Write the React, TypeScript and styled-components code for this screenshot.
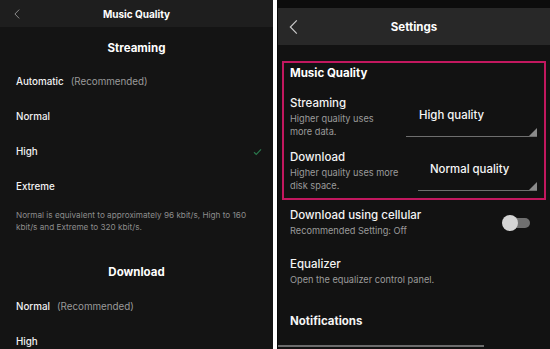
import React from 'react';
import styled, { createGlobalStyle } from 'styled-components';

const GlobalStyle = createGlobalStyle`
  html, body {
    margin: 0;
    padding: 0;
    background: #ffffff;
  }
  body {
    font-family: Inter, "Noto Sans", "Liberation Sans", sans-serif;
    -webkit-font-smoothing: antialiased;
  }
`;

const Back: React.FC<{ size: number; color: string }> = ({ size, color }) => (
  <svg width={size * 0.6} height={size} viewBox="0 0 6 10" fill="none">
    <path d="M5.2 0.6 L0.9 5 L5.2 9.4" stroke={color} strokeWidth="0.8" />
  </svg>
);

const Check = () => (
  <svg width="9" height="8" viewBox="0 0 9 8" fill="none">
    <path d="M1 4.3 L3.3 6.5 L8 1.3" stroke="#2a774c" strokeWidth="1.2" />
  </svg>
);

export default function App() {
  return (
    <>
      <GlobalStyle />
      <Page>
        <LeftPhone>
          <LeftHeader>
            <BackSlot>
              <Back size={10} color="#a8a8a8" />
            </BackSlot>
            <LeftTitle>Music Quality</LeftTitle>
          </LeftHeader>
          <SectionTitle>Streaming</SectionTitle>
          <Option>
            Automatic<Hint>(Recommended)</Hint>
          </Option>
          <Option>Normal</Option>
          <Option>
            High
            <CheckSlot>
              <Check />
            </CheckSlot>
          </Option>
          <Option>Extreme</Option>
          <Note>
            Normal is equivalent to approximately 96 kbit/s, High to 160 kbit/s and Extreme to 320 kbit/s.
          </Note>
          <SectionTitle $short>Download</SectionTitle>
          <Option>
            Normal<Hint>(Recommended)</Hint>
          </Option>
          <Option>High</Option>
        </LeftPhone>

        <RightPhone>
          <StatusBar />
          <RightHeader>
            <BackSlot $wide>
              <Back size={15} color="#c8c8c8" />
            </BackSlot>
            <RightTitle>Settings</RightTitle>
          </RightHeader>
          <Body>
            <Highlight>
              <GroupTitle>Music Quality</GroupTitle>
              <QualityRow>
                <TextCol>
                  <Label>Streaming</Label>
                  <Desc>
                    Higher quality uses
                    <br />
                    more data.
                  </Desc>
                </TextCol>
                <Select $width={131} $inset={13}>High quality</Select>
              </QualityRow>
              <QualityRow>
                <TextCol>
                  <Label>Download</Label>
                  <Desc>
                    Higher quality uses more
                    <br />
                    disk space.
                  </Desc>
                </TextCol>
                <Select $width={119} $inset={12}>Normal quality</Select>
              </QualityRow>
            </Highlight>

            <SettingRow $top={6}>
              <TextCol>
                <Label>Download using cellular</Label>
                <Desc>Recommended Setting: Off</Desc>
              </TextCol>
              <Toggle>
                <Knob />
              </Toggle>
            </SettingRow>
            <SettingRow $top={17}>
              <TextCol>
                <Label>Equalizer</Label>
                <Desc>Open the equalizer control panel.</Desc>
              </TextCol>
            </SettingRow>
            <SettingRow $top={25}>
              <GroupLabel>Notifications</GroupLabel>
            </SettingRow>
            <BottomEdge />
          </Body>
        </RightPhone>
      </Page>
    </>
  );
}

const Page = styled.div`
  display: flex;
  width: 550px;
  height: 349px;
  overflow: hidden;
  gap: 4px;
  background: #ffffff;
`;

const LeftPhone = styled.div`
  width: 273px;
  height: 349px;
  background: #141414;
  display: flex;
  flex-direction: column;
  flex-shrink: 0;
  overflow: hidden;
  color: #ffffff;
`;

const LeftHeader = styled.div`
  height: 27px;
  flex-shrink: 0;
  background: #1e1e1e;
  position: relative;
  display: flex;
  align-items: center;
  justify-content: center;
`;

const BackSlot = styled.div<{ $wide?: boolean }>`
  position: absolute;
  left: ${(p) => (p.$wide ? '11px' : '14px')};
  top: 50%;
  transform: translateY(-50%);
  display: flex;
`;

const LeftTitle = styled.div`
  font-size: 10px;
  font-weight: 700;
`;

const SectionTitle = styled.div<{ $short?: boolean }>`
  height: ${(p) => (p.$short ? '34px' : '32px')};
  padding-top: ${(p) => (p.$short ? '0' : '5px')};
  flex-shrink: 0;
  display: flex;
  align-items: center;
  justify-content: center;
  font-size: 11.5px;
  font-weight: 700;
`;

const Option = styled.div`
  height: 35px;
  flex-shrink: 0;
  display: flex;
  align-items: center;
  padding: 0 16px;
  font-size: 9.8px;
  font-weight: 500;
  color: #f2f2f2;
`;

const Hint = styled.span`
  margin-left: 7px;
  color: #9a9a9a;
  font-weight: 400;
`;

const CheckSlot = styled.span`
  margin-left: auto;
  margin-right: -5px;
  display: flex;
`;

const Note = styled.div`
  height: 51px;
  flex-shrink: 0;
  box-sizing: border-box;
  padding: 5px 16px 0;
  font-size: 8.2px;
  line-height: 12px;
  color: #8c8c8c;
`;

const RightPhone = styled.div`
  flex: 1;
  height: 349px;
  background: #121212;
  border-left: 1px solid #080808;
  display: flex;
  flex-direction: column;
  overflow: hidden;
  color: #ffffff;
`;

const StatusBar = styled.div`
  height: 8px;
  flex-shrink: 0;
  background: #0c0c0c;
`;

const RightHeader = styled.div`
  height: 37px;
  flex-shrink: 0;
  background: #282828;
  position: relative;
  display: flex;
  align-items: center;
  justify-content: center;
`;

const RightTitle = styled.div`
  font-size: 11.5px;
  font-weight: 700;
`;

const Body = styled.div`
  flex: 1;
  display: flex;
  flex-direction: column;
  padding-top: 16px;
`;

const Highlight = styled.div`
  margin: 0 4px;
  border: 2px solid #c2185f;
  padding: 0 7px 6px 6px;
  display: flex;
  flex-direction: column;
`;

const GroupTitle = styled.div`
  height: 20px;
  display: flex;
  align-items: center;
  font-size: 11.5px;
  font-weight: 700;
`;

const QualityRow = styled.div`
  display: flex;
  align-items: center;
  justify-content: space-between;
  margin-top: 11px;

  & + & {
    margin-top: 10px;
  }
`;

const TextCol = styled.div`
  display: flex;
  flex-direction: column;
`;

const Label = styled.div`
  font-size: 11.5px;
  line-height: 18px;
  font-weight: 500;
  color: #f4f4f4;
`;

const GroupLabel = styled(Label)`
  font-weight: 700;
`;

const Desc = styled.div`
  font-size: 9.2px;
  line-height: 13px;
  color: #9b9b9b;
`;

const Select = styled.div<{ $width: number; $inset: number }>`
  width: ${(p) => p.$width}px;
  height: 42px;
  box-sizing: border-box;
  padding-left: ${(p) => p.$inset}px;
  padding-bottom: 1px;
  border-bottom: 1.5px solid #6e6e6e;
  display: flex;
  align-items: center;
  position: relative;
  font-size: 11.4px;
  font-weight: 500;
  color: #f6f6f6;

  &::after {
    content: '';
    position: absolute;
    right: 0;
    bottom: 0;
    border-style: solid;
    border-width: 0 0 8px 8px;
    border-color: transparent transparent #8a8a8a transparent;
  }
`;

const SettingRow = styled.div<{ $top: number }>`
  margin-top: ${(p) => p.$top}px;
  padding: 0 20px 0 12px;
  display: flex;
  align-items: center;
  justify-content: space-between;

  ${Desc} {
    line-height: 14px;
  }
`;

const Toggle = styled.div`
  width: 22px;
  height: 10px;
  border-radius: 5px;
  background: #6f6f6f;
  position: relative;
  margin-top: 2px;
`;

const Knob = styled.div`
  position: absolute;
  left: -6px;
  top: -3px;
  width: 16px;
  height: 16px;
  border-radius: 50%;
  background: #d4d4d4;
`;

const BottomEdge = styled.div`
  margin-top: auto;
  margin-bottom: 2px;
  width: 206px;
  height: 2px;
  background: #6c6c6c;
`;
